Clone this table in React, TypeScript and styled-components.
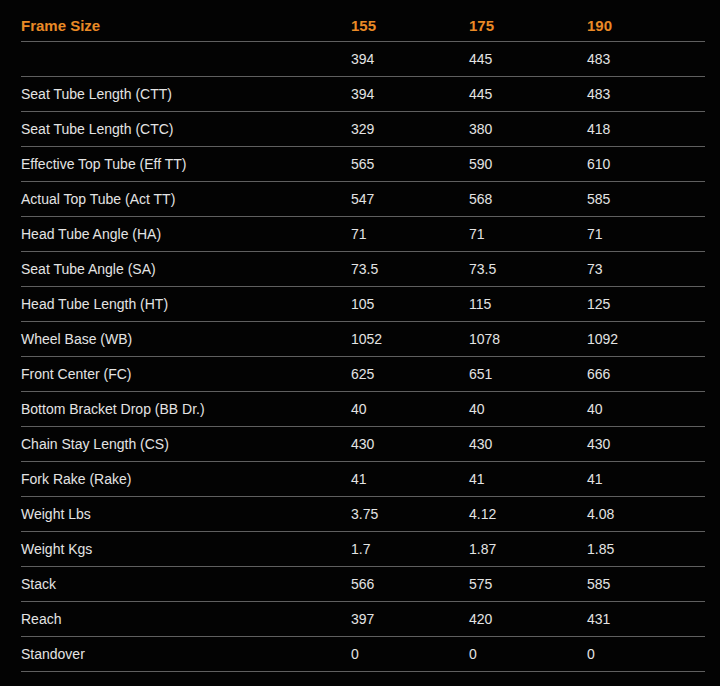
import React from 'react';
import styled, { createGlobalStyle } from 'styled-components';

const GlobalStyle = createGlobalStyle`
    html, body {
        margin: 0;
        padding: 0;
        background: #030303;
    }
`;

interface CellProps {
    head?: boolean;
}

const StyledWrapper = styled.div`
    width: 720px;
    min-height: 686px;
    box-sizing: border-box;
    padding: 7px 15px 0 21px;
    background: #030303;
    font-family: 'Liberation Sans', Arial, sans-serif;
`;

const StyledTable = styled.div`
    display: grid;
    grid-template-columns: 330px 118px 118px 118px;
    width: 684px;
`;

const StyledRow = styled.div`
    display: contents;
`;

const StyledCell = styled.div<CellProps>`
    box-sizing: border-box;
    height: 35px;
    display: flex;
    align-items: center;
    padding-top: ${(p) => (p.head ? '2px' : '0')};
    border-bottom: 1px solid #5f5f5f;
    font-size: ${(p) => (p.head ? '15px' : '14px')};
    font-weight: ${(p) => (p.head ? 700 : 400)};
    color: ${(p) => (p.head ? '#ea8a26' : '#e4e4e4')};
    white-space: nowrap;
`;

const header = ['Frame Size', '155', '175', '190'];

const rows: string[][] = [
    ['', '394', '445', '483'],
    ['Seat Tube Length (CTT)', '394', '445', '483'],
    ['Seat Tube Length (CTC)', '329', '380', '418'],
    ['Effective Top Tube (Eff TT)', '565', '590', '610'],
    ['Actual Top Tube (Act TT)', '547', '568', '585'],
    ['Head Tube Angle (HA)', '71', '71', '71'],
    ['Seat Tube Angle (SA)', '73.5', '73.5', '73'],
    ['Head Tube Length (HT)', '105', '115', '125'],
    ['Wheel Base (WB)', '1052', '1078', '1092'],
    ['Front Center (FC)', '625', '651', '666'],
    ['Bottom Bracket Drop (BB Dr.)', '40', '40', '40'],
    ['Chain Stay Length (CS)', '430', '430', '430'],
    ['Fork Rake (Rake)', '41', '41', '41'],
    ['Weight Lbs', '3.75', '4.12', '4.08'],
    ['Weight Kgs', '1.7', '1.87', '1.85'],
    ['Stack', '566', '575', '585'],
    ['Reach', '397', '420', '431'],
    ['Standover', '0', '0', '0']
];

export default function App() {
    return (
        <StyledWrapper>
            <GlobalStyle />
            <StyledTable>
                <StyledRow>
                    {header.map((h) => (
                        <StyledCell head key={h}>
                            {h}
                        </StyledCell>
                    ))}
                </StyledRow>
                {rows.map((r, i) => (
                    <StyledRow key={i}>
                        {r.map((c, j) => (
                            <StyledCell key={j}>{c}</StyledCell>
                        ))}
                    </StyledRow>
                ))}
            </StyledTable>
        </StyledWrapper>
    );
}
